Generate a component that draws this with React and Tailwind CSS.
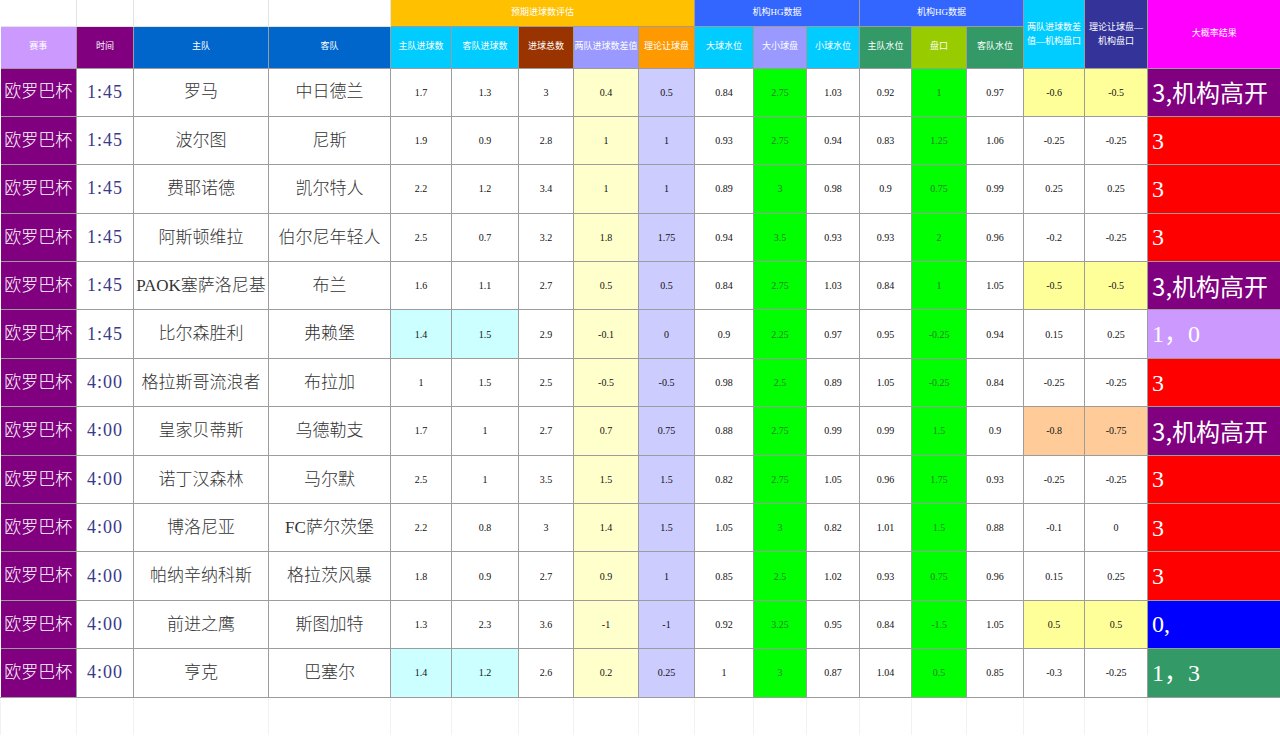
const colWidths = [76, 57, 135, 122, 61, 67, 55, 65, 56, 59, 53, 53, 52, 55, 57, 61, 63, 133];

const headers = [
	{ label: "赛事", bg: "bg-[#cc99ff]" },
	{ label: "时间", bg: "bg-[#800080]" },
	{ label: "主队", bg: "bg-[#0066cc]" },
	{ label: "客队", bg: "bg-[#0066cc]" },
	{ label: "主队进球数", bg: "bg-[#00ccff]" },
	{ label: "客队进球数", bg: "bg-[#00ccff]" },
	{ label: "进球总数", bg: "bg-[#993300]" },
	{ label: "两队进球数差值", bg: "bg-[#9999ff]" },
	{ label: "理论让球盘", bg: "bg-[#ff9900]" },
	{ label: "大球水位", bg: "bg-[#00ccff]" },
	{ label: "大小球盘", bg: "bg-[#9999ff]" },
	{ label: "小球水位", bg: "bg-[#00ccff]" },
	{ label: "主队水位", bg: "bg-[#339966]" },
	{ label: "盘口", bg: "bg-[#99cc00]" },
	{ label: "客队水位", bg: "bg-[#339966]" },
];

const resultStyles = {
	high: { bg: "bg-[#800080]", font: "font-['Noto_Sans_CJK_SC',sans-serif]" },
	red: { bg: "bg-[#ff0000]", font: "font-['Liberation_Serif','Noto_Sans_CJK_SC',serif]" },
	lilac: { bg: "bg-[#cc99ff]", font: "font-['Liberation_Serif','Noto_Sans_CJK_SC',serif]" },
	blue: { bg: "bg-[#0000ff]", font: "font-['Liberation_Serif','Noto_Sans_CJK_SC',serif]" },
	green: { bg: "bg-[#339966]", font: "font-['Liberation_Serif','Noto_Sans_CJK_SC',serif]" },
};

// [time, home, away, numbers, result, resultStyle, diffBg, goalsBg]
const rows = [
	["1:45", "罗马", "中日德兰", ["1.7", "1.3", "3", "0.4", "0.5", "0.84", "2.75", "1.03", "0.92", "1", "0.97", "-0.6", "-0.5"], "3,机构高开", "high", "yellow", false],
	["1:45", "波尔图", "尼斯", ["1.9", "0.9", "2.8", "1", "1", "0.93", "2.75", "0.94", "0.83", "1.25", "1.06", "-0.25", "-0.25"], "3", "red", null, false],
	["1:45", "费耶诺德", "凯尔特人", ["2.2", "1.2", "3.4", "1", "1", "0.89", "3", "0.98", "0.9", "0.75", "0.99", "0.25", "0.25"], "3", "red", null, false],
	["1:45", "阿斯顿维拉", "伯尔尼年轻人", ["2.5", "0.7", "3.2", "1.8", "1.75", "0.94", "3.5", "0.93", "0.93", "2", "0.96", "-0.2", "-0.25"], "3", "red", null, false],
	["1:45", "PAOK塞萨洛尼基", "布兰", ["1.6", "1.1", "2.7", "0.5", "0.5", "0.84", "2.75", "1.03", "0.84", "1", "1.05", "-0.5", "-0.5"], "3,机构高开", "high", "yellow", false],
	["1:45", "比尔森胜利", "弗赖堡", ["1.4", "1.5", "2.9", "-0.1", "0", "0.9", "2.25", "0.97", "0.95", "-0.25", "0.94", "0.15", "0.25"], "1，0", "lilac", null, true],
	["4:00", "格拉斯哥流浪者", "布拉加", ["1", "1.5", "2.5", "-0.5", "-0.5", "0.98", "2.5", "0.89", "1.05", "-0.25", "0.84", "-0.25", "-0.25"], "3", "red", null, false],
	["4:00", "皇家贝蒂斯", "乌德勒支", ["1.7", "1", "2.7", "0.7", "0.75", "0.88", "2.75", "0.99", "0.99", "1.5", "0.9", "-0.8", "-0.75"], "3,机构高开", "high", "peach", false],
	["4:00", "诺丁汉森林", "马尔默", ["2.5", "1", "3.5", "1.5", "1.5", "0.82", "2.75", "1.05", "0.96", "1.75", "0.93", "-0.25", "-0.25"], "3", "red", null, false],
	["4:00", "博洛尼亚", "FC萨尔茨堡", ["2.2", "0.8", "3", "1.4", "1.5", "1.05", "3", "0.82", "1.01", "1.5", "0.88", "-0.1", "0"], "3", "red", null, false],
	["4:00", "帕纳辛纳科斯", "格拉茨风暴", ["1.8", "0.9", "2.7", "0.9", "1", "0.85", "2.5", "1.02", "0.93", "0.75", "0.96", "0.15", "0.25"], "3", "red", null, false],
	["4:00", "前进之鹰", "斯图加特", ["1.3", "2.3", "3.6", "-1", "-1", "0.92", "3.25", "0.95", "0.84", "-1.5", "1.05", "0.5", "0.5"], "0,", "blue", "yellow", false],
	["4:00", "亨克", "巴塞尔", ["1.4", "1.2", "2.6", "0.2", "0.25", "1", "3", "0.87", "1.04", "0.5", "0.85", "-0.3", "-0.25"], "1，3", "green", null, true],
];

const cell = "border border-[#9c9c9c] text-center align-middle p-0";
const serif = "font-['Liberation_Serif','Noto_Sans_CJK_SC',serif]";

function numBg(i, diffBg, goalsBg) {
	if ((i === 0 || i === 1) && goalsBg) return "bg-[#ccffff]";
	if (i === 3) return "bg-[#ffffcc]";
	if (i === 4) return "bg-[#ccccff]";
	if (i === 6 || i === 9) return "bg-[#00ff00] text-[#2c7a2c]";
	if (i === 11 || i === 12) {
		if (diffBg === "yellow") return "bg-[#ffff99]";
		if (diffBg === "peach") return "bg-[#ffcc99]";
	}
	return "bg-white";
}

export default function App() {
	return (
		<div className={`w-[1280px] h-[756px] bg-white overflow-hidden ${serif}`}>
			<table className="table-fixed border-collapse w-[1280px]">
				<colgroup>
					{colWidths.map((w, i) => (
						<col key={i} style={{ width: w }} />
					))}
				</colgroup>
				<thead>
					<tr className="h-[26px]">
						<th className="border border-[#e4e4e4] border-t-0 border-l-0 bg-white" />
						<th className="border border-[#e4e4e4] border-t-0 bg-white" />
						<th className="border border-[#e4e4e4] border-t-0 bg-white" />
						<th className="border border-[#e4e4e4] border-t-0 bg-white" />
						<th colSpan={5} className={`${cell} border-t-0 bg-[#ffc000] text-[9px] font-normal text-white`}>
							预期进球数评估
						</th>
						<th colSpan={3} className={`${cell} border-t-0 bg-[#3366ff] text-[9px] font-normal text-white`}>
							机构HG数据
						</th>
						<th colSpan={3} className={`${cell} border-t-0 bg-[#3366ff] text-[9px] font-normal text-white`}>
							机构HG数据
						</th>
						<th rowSpan={2} className={`${cell} border-t-0 bg-[#00ccff] text-[9px] leading-[14px] font-normal text-white px-[2px]`}>
							两队进球数差值—机构盘口
						</th>
						<th rowSpan={2} className={`${cell} border-t-0 bg-[#333399] text-[9px] leading-[14px] font-normal text-white px-[2px]`}>
							理论让球盘—机构盘口
						</th>
						<th rowSpan={2} className={`${cell} border-t-0 border-r-0 bg-[#ff00ff] text-[9px] font-normal text-white`}>
							大概率结果
						</th>
					</tr>
					<tr className="h-[42px]">
						{headers.map((h, i) => (
							<th
								key={i}
								className={`${cell} ${h.bg} ${i === 0 ? "border-l-0" : ""} text-[9px] font-normal text-white whitespace-nowrap`}
							>
								{h.label}
							</th>
						))}
					</tr>
				</thead>
				<tbody>
					{rows.map(([time, home, away, nums, result, rs, diffBg, goalsBg], r) => (
						<tr key={r} className="h-[48.4px]">
							<td className={`${cell} border-l-0 bg-[#800080] text-white text-[17px] font-light whitespace-nowrap`}>欧罗巴杯</td>
							<td className={`${cell} bg-white text-[#3a3a88] text-[18px] tracking-[1px]`}>{time}</td>
							<td className={`${cell} bg-white text-[#333] text-[17px] font-light whitespace-nowrap`}>{home}</td>
							<td className={`${cell} bg-white text-[#333] text-[17px] font-light whitespace-nowrap`}>{away}</td>
							{nums.map((n, i) => (
								<td key={i} className={`${cell} ${numBg(i, diffBg, goalsBg)} text-[10px] ${i === 6 || i === 9 ? "" : "text-[#111]"}`}>
									{n}
								</td>
							))}
							<td className={`${cell} border-r-0 ${resultStyles[rs].bg} ${resultStyles[rs].font} text-white text-[24px] text-left pl-[4px] whitespace-nowrap`}>
								{result}
							</td>
						</tr>
					))}
					<tr className="h-[38px]">
						{colWidths.map((_, i) => (
							<td key={i} className="border-x border-[#f2f2f2] bg-white" />
						))}
					</tr>
				</tbody>
			</table>
		</div>
	);
}
